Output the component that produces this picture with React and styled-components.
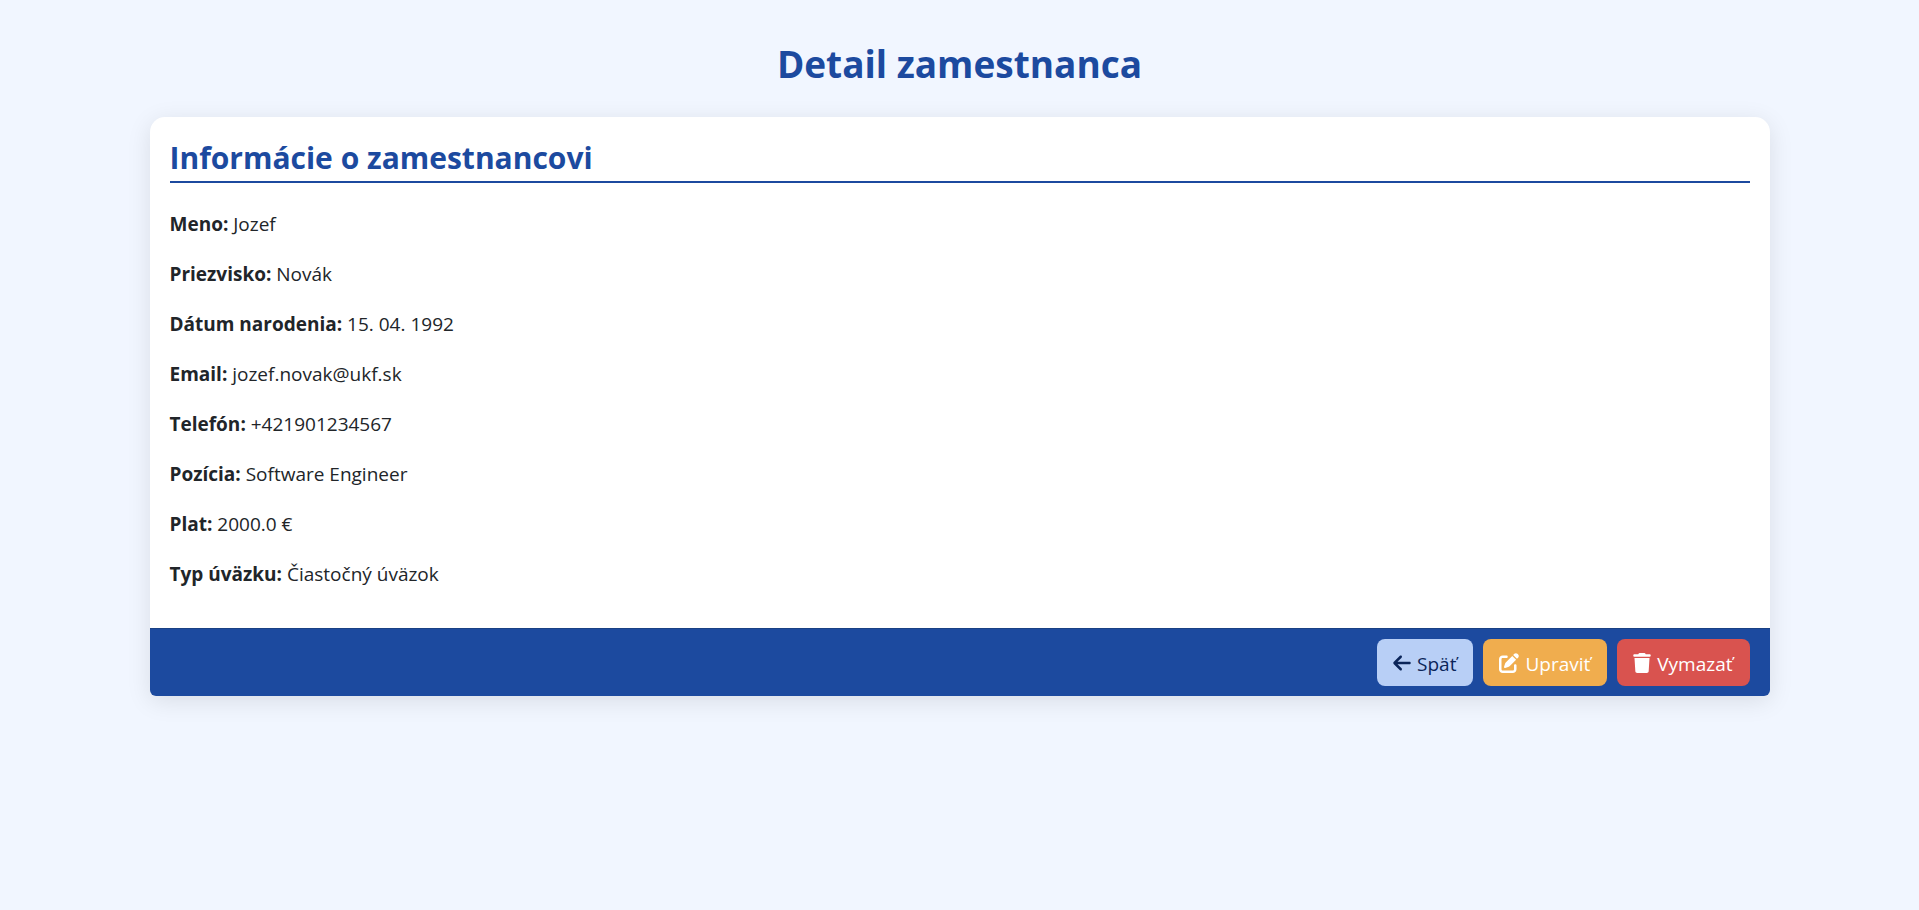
import React from "react";
import styled, { createGlobalStyle } from "styled-components";
import { FaArrowLeft, FaPenToSquare, FaTrash } from "react-icons/fa6";

const GlobalStyle = createGlobalStyle`
  *, *::before, *::after { box-sizing: border-box; }
  body {
    margin: 0;
    background: #f1f6ff;
    color: #212529;
    font-family: "Segoe UI", "Open Sans", "Noto Sans", sans-serif;
    font-size: 19px;
    line-height: 30px;
  }
`;

const Container = styled.main`
  max-width: 1650px;
  margin: 0 auto;
  padding: 40px 15px;
`;

const Title = styled.h1`
  margin: 0 0 30px;
  color: #1c4a9f;
  font-size: 37px;
  font-weight: 700;
  line-height: 47px;
  text-align: center;
`;

const Card = styled.section`
  background: #fff;
  border-radius: 15px 15px 6px 6px;
  box-shadow: 0 5px 25px rgba(0, 0, 0, 0.1);
`;

const CardBody = styled.div`
  padding: 22px 20px 19px;
`;

const CardTitle = styled.h2`
  margin: 0 0 26px;
  padding-bottom: 4px;
  border-bottom: 2px solid #1c4a9f;
  color: #1c4a9f;
  font-size: 30px;
  font-weight: 700;
  line-height: 38px;
`;

const Field = styled.p`
  margin: 0 0 20px;
`;

const Label = styled.strong`
  font-weight: 700;
`;

const CardFooter = styled.footer`
  display: flex;
  justify-content: flex-end;
  gap: 10px;
  padding: 10px 20px;
  border-top: 1px solid #1a4184;
  border-radius: 0 0 6px 6px;
  background: #1c4a9f;
`;

const variants = {
  back: { bg: "#b8cff6", fg: "#0b2559" },
  edit: { bg: "#f0ad4e", fg: "#fff" },
  remove: { bg: "#d9534f", fg: "#fff" },
};

const Button = styled.button`
  display: flex;
  align-items: center;
  gap: 6px;
  height: 47px;
  padding: 0 17px 0 16px;
  border: 0;
  border-radius: 8px;
  background: ${({ $variant }) => variants[$variant].bg};
  color: ${({ $variant }) => variants[$variant].fg};
  font: inherit;
  cursor: pointer;

  svg {
    width: ${({ $variant }) => ($variant === "edit" ? 20 : 18)}px;
    height: 20px;
  }
`;

const ButtonText = styled.span`
  padding-top: 2px;
`;

const fields = [
  ["Meno", "Jozef"],
  ["Priezvisko", "Novák"],
  ["Dátum narodenia", "15. 04. 1992"],
  ["Email", "jozef.novak@ukf.sk"],
  ["Telefón", "+421901234567"],
  ["Pozícia", "Software Engineer"],
  ["Plat", "2000.0 €"],
  ["Typ úväzku", "Čiastočný úväzok"],
];

const actions = [
  { variant: "back", text: "Späť", Icon: FaArrowLeft },
  { variant: "edit", text: "Upraviť", Icon: FaPenToSquare },
  { variant: "remove", text: "Vymazať", Icon: FaTrash },
];

export default function App() {
  return (
    <>
      <GlobalStyle />
      <Container>
        <Title>Detail zamestnanca</Title>
        <Card>
          <CardBody>
            <CardTitle>Informácie o zamestnancovi</CardTitle>
            {fields.map(([label, value]) => (
              <Field key={label}>
                <Label>{label}:</Label> {value}
              </Field>
            ))}
          </CardBody>
          <CardFooter>
            {actions.map(({ variant, text, Icon }) => (
              <Button key={variant} type="button" $variant={variant}>
                <Icon aria-hidden="true" />
                <ButtonText>{text}</ButtonText>
              </Button>
            ))}
          </CardFooter>
        </Card>
      </Container>
    </>
  );
}
